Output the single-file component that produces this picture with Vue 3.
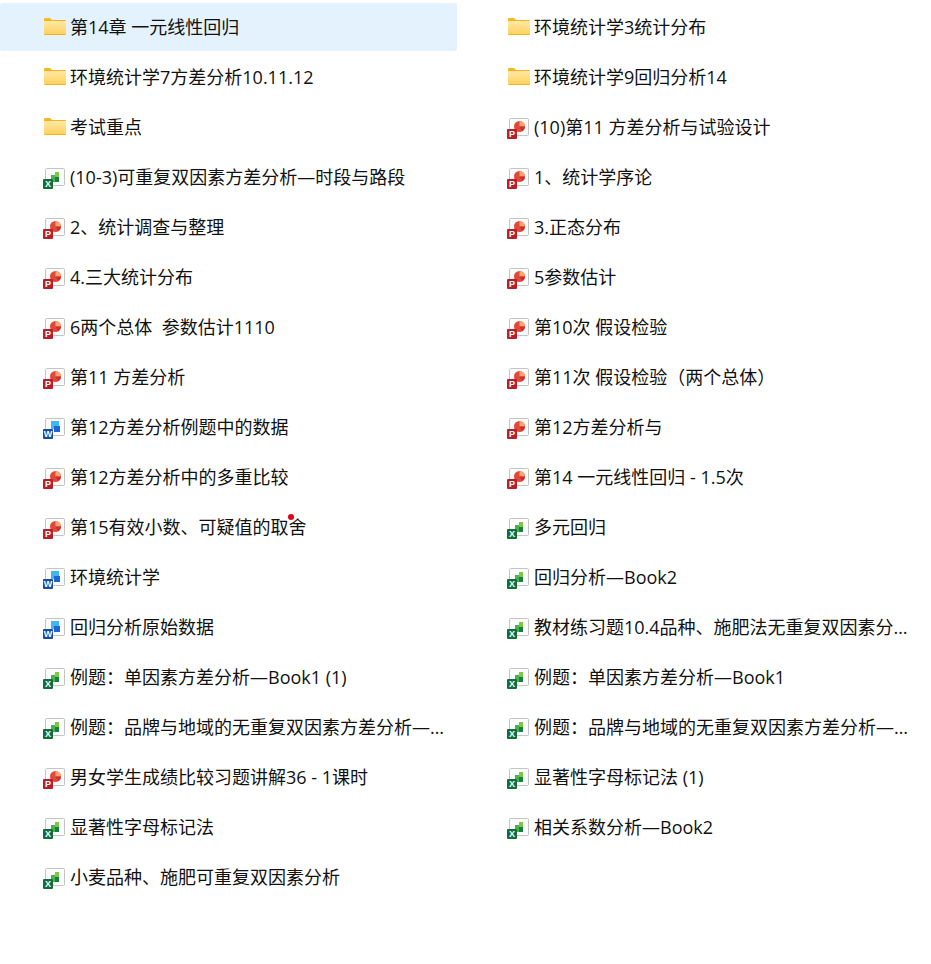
<template>
  <div class="file-grid">
    <div
      v-for="file in files"
      :key="file.name"
      class="file-item"
      :class="{ active: file.active }"
    >
      <svg class="file-icon" width="24" height="24" viewBox="0 0 24 24">
        <!-- 文件夹 -->
        <template v-if="file.type === 'folder'">
          <path d="M1 4a1 1 0 0 1 1-1h5l2 2v3H1z" fill="#fbb81c" />
          <rect x="1" y="5" width="22" height="15" rx="1" fill="#f6b21b" />
          <rect x="1" y="6" width="22" height="13" fill="url(#folderFill)" />
          <defs>
            <linearGradient id="folderFill" x1="0" y1="0" x2="0" y2="1">
              <stop offset="0" stop-color="#ffe9a6" />
              <stop offset="1" stop-color="#ffd260" />
            </linearGradient>
          </defs>
        </template>
        <!-- 文档 -->
        <template v-else>
          <path
            d="M3.5 3.5h17a1 1 0 0 1 1 1v15a1 1 0 0 1-1 1H3.5a1 1 0 0 1-1-1v-15a1 1 0 0 1 1-1z"
            fill="#fcfcfc"
            stroke="#c4c4c4"
          />
          <template v-if="file.type === 'xls'">
            <rect x="12" y="7" width="4" height="5" fill="#7ac943" />
            <rect x="12" y="12" width="4" height="5" fill="#15803d" />
            <rect x="8" y="10" width="4" height="7" fill="#4caf50" />
          </template>
          <template v-else-if="file.type === 'ppt'">
            <circle cx="12.5" cy="11.5" r="5.5" fill="#e2483a" />
            <path d="M12.5 11.5V6a5.5 5.5 0 0 1 5.5 5.5z" fill="#f9a76f" />
            <path d="M12.5 11.5H18a5.5 5.5 0 0 1-2.8 4.8z" fill="#c8312f" />
          </template>
          <template v-else>
            <rect x="8" y="6" width="8" height="8" fill="#41b6f5" />
            <rect x="11" y="11" width="6" height="6" fill="#1a66d6" />
          </template>
          <rect
            x="0"
            y="14"
            width="10"
            height="10"
            rx="1"
            :fill="badgeColors[file.type]"
          />
          <text x="5" y="22.3" class="badge-letter">{{ badgeLetters[file.type] }}</text>
        </template>
      </svg>
      <span class="file-name">{{ file.name }}</span>
      <i v-if="file.dot" class="red-dot"></i>
    </div>
  </div>
</template>

<script setup>
const badgeColors = { xls: "#0f6f3c", ppt: "#b81f2d", doc: "#1a4aa8" };
const badgeLetters = { xls: "X", ppt: "P", doc: "W" };

const files = [
  { type: "folder", name: "第14章 一元线性回归", active: true },
  { type: "folder", name: "环境统计学3统计分布" },
  { type: "folder", name: "环境统计学7方差分析10.11.12" },
  { type: "folder", name: "环境统计学9回归分析14" },
  { type: "folder", name: "考试重点" },
  { type: "ppt", name: "(10)第11 方差分析与试验设计" },
  { type: "xls", name: "(10-3)可重复双因素方差分析—时段与路段" },
  { type: "ppt", name: "1、统计学序论" },
  { type: "ppt", name: "2、统计调查与整理" },
  { type: "ppt", name: "3.正态分布" },
  { type: "ppt", name: "4.三大统计分布" },
  { type: "ppt", name: "5参数估计" },
  { type: "ppt", name: "6两个总体  参数估计1110" },
  { type: "ppt", name: "第10次 假设检验" },
  { type: "ppt", name: "第11 方差分析" },
  { type: "ppt", name: "第11次 假设检验（两个总体）" },
  { type: "doc", name: "第12方差分析例题中的数据" },
  { type: "ppt", name: "第12方差分析与" },
  { type: "ppt", name: "第12方差分析中的多重比较" },
  { type: "ppt", name: "第14 一元线性回归 - 1.5次" },
  { type: "ppt", name: "第15有效小数、可疑值的取舍", dot: true },
  { type: "xls", name: "多元回归" },
  { type: "doc", name: "环境统计学" },
  { type: "xls", name: "回归分析—Book2" },
  { type: "doc", name: "回归分析原始数据" },
  { type: "xls", name: "教材练习题10.4品种、施肥法无重复双因素分析—Book1" },
  { type: "xls", name: "例题：单因素方差分析—Book1 (1)" },
  { type: "xls", name: "例题：单因素方差分析—Book1" },
  { type: "xls", name: "例题：品牌与地域的无重复双因素方差分析—Book1 (1)" },
  { type: "xls", name: "例题：品牌与地域的无重复双因素方差分析—Book1" },
  { type: "ppt", name: "男女学生成绩比较习题讲解36 - 1课时" },
  { type: "xls", name: "显著性字母标记法 (1)" },
  { type: "xls", name: "显著性字母标记法" },
  { type: "xls", name: "相关系数分析—Book2" },
  { type: "xls", name: "小麦品种、施肥可重复双因素分析" },
];
</script>

<style scoped>
.file-grid {
  display: grid;
  grid-template-columns: 457px 457px;
  grid-auto-rows: 48px;
  column-gap: 7px;
  row-gap: 2px;
  padding-top: 3px;
  height: 961px;
  overflow: hidden;
  font-family: "Open Sans", "Noto Sans CJK SC", sans-serif;
}

.file-item {
  position: relative;
  display: flex;
  align-items: center;
  padding-left: 43px;
  border-radius: 2px;
}

.file-item.active {
  background: #e3f2fd;
}

.file-icon {
  flex: none;
  margin-right: 3px;
}

.file-name {
  width: 376px;
  font-size: 18px;
  line-height: 24px;
  color: #111;
  white-space: pre;
  overflow: hidden;
  text-overflow: ellipsis;
}

.badge-letter {
  font-family: "Liberation Sans", sans-serif;
  font-size: 9px;
  font-weight: 700;
  fill: #fff;
  text-anchor: middle;
}

.red-dot {
  position: absolute;
  left: 288px;
  top: 11px;
  width: 6px;
  height: 6px;
  border-radius: 50%;
  background: #e60012;
}
</style>
